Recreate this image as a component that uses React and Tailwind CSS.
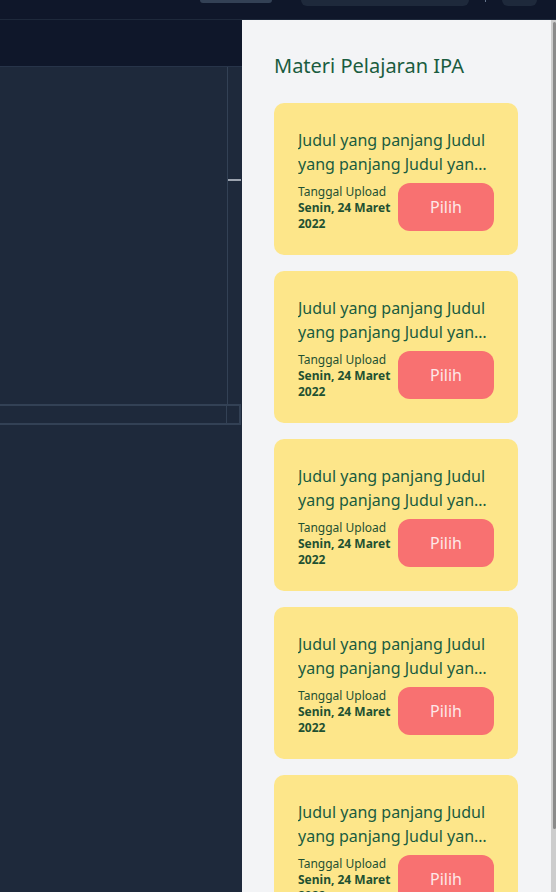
export default function App() {
  const cards = [0, 1, 2, 3, 4];
  return (
    <div className="w-[556px] h-[892px] overflow-hidden bg-[#1e293b] font-['Noto_Sans',sans-serif]">
      {/* top bar */}
      <div className="flex items-start h-[20px] bg-[#0f172a] border-b border-[#1e293b] pl-[200px]">
        <div className="w-[72px] h-[3px] rounded-b-full bg-[#334155]" />
        <div className="ml-[29px] w-[168px] h-[6px] rounded-b-md bg-[#1e293b]" />
        <div className="ml-[16px] w-px h-[2px] bg-[#64748b]" />
        <div className="ml-[16px] w-[35px] h-[6px] rounded-b-md bg-[#1e293b]" />
      </div>
      <div className="flex h-[872px]">
        {/* left area */}
        <div className="w-[242px] flex flex-col">
          <div className="h-[47px] bg-[#0f172a] border-b border-[#273449]" />
          <div className="flex h-[337px] pr-px">
            <div className="flex-1" />
            <div className="w-[14px] border-l border-[#334155] pt-[112px]">
              <div className="h-[2px] bg-[#9ca3af]" />
            </div>
          </div>
          <div className="flex h-[21px] -ml-1 w-[245px] border-2 border-[#334155]">
            <div className="flex-1" />
            <div className="w-[13px] border-l border-[#334155]" />
          </div>
        </div>
        {/* right panel */}
        <div className="flex-1 flex bg-[#f3f4f6] overflow-hidden">
          <div className="flex-1 pl-8 pt-8">
            <h2 className="text-[20px] leading-7 text-[#1a5c3f]">Materi Pelajaran IPA</h2>
            <div className="mt-[23px] flex flex-col gap-4">
              {cards.map((i) => (
                <div key={i} className="w-[244px] h-[152px] rounded-[10px] bg-[#fde68a] px-6 pt-[25px]">
                  <p className="text-[16px] leading-6 text-[#1a5c3f] line-clamp-2">
                    Judul yang panjang Judul yang panjang Judul yang panjang Judul yang panjang
                  </p>
                  <div className="mt-[7px] flex items-center justify-between">
                    <div className="w-[96px] translate-y-px text-[12px] leading-4 text-[#1f5132]">
                      <div>Tanggal Upload</div>
                      <div className="font-bold">Senin, 24 Maret 2022</div>
                    </div>
                    <button className="w-[96px] h-[48px] rounded-xl bg-[#f87171] text-[16px] text-[#fde8e8]">
                      Pilih
                    </button>
                  </div>
                </div>
              ))}
            </div>
          </div>
          {/* scrollbar */}
          <div className="w-[5px] flex justify-end pt-[2px] bg-[#cdcdcd]">
            <div className="w-[3px] h-[807px] rounded-sm bg-[#8a8a8a]" />
          </div>
        </div>
      </div>
    </div>
  );
}
